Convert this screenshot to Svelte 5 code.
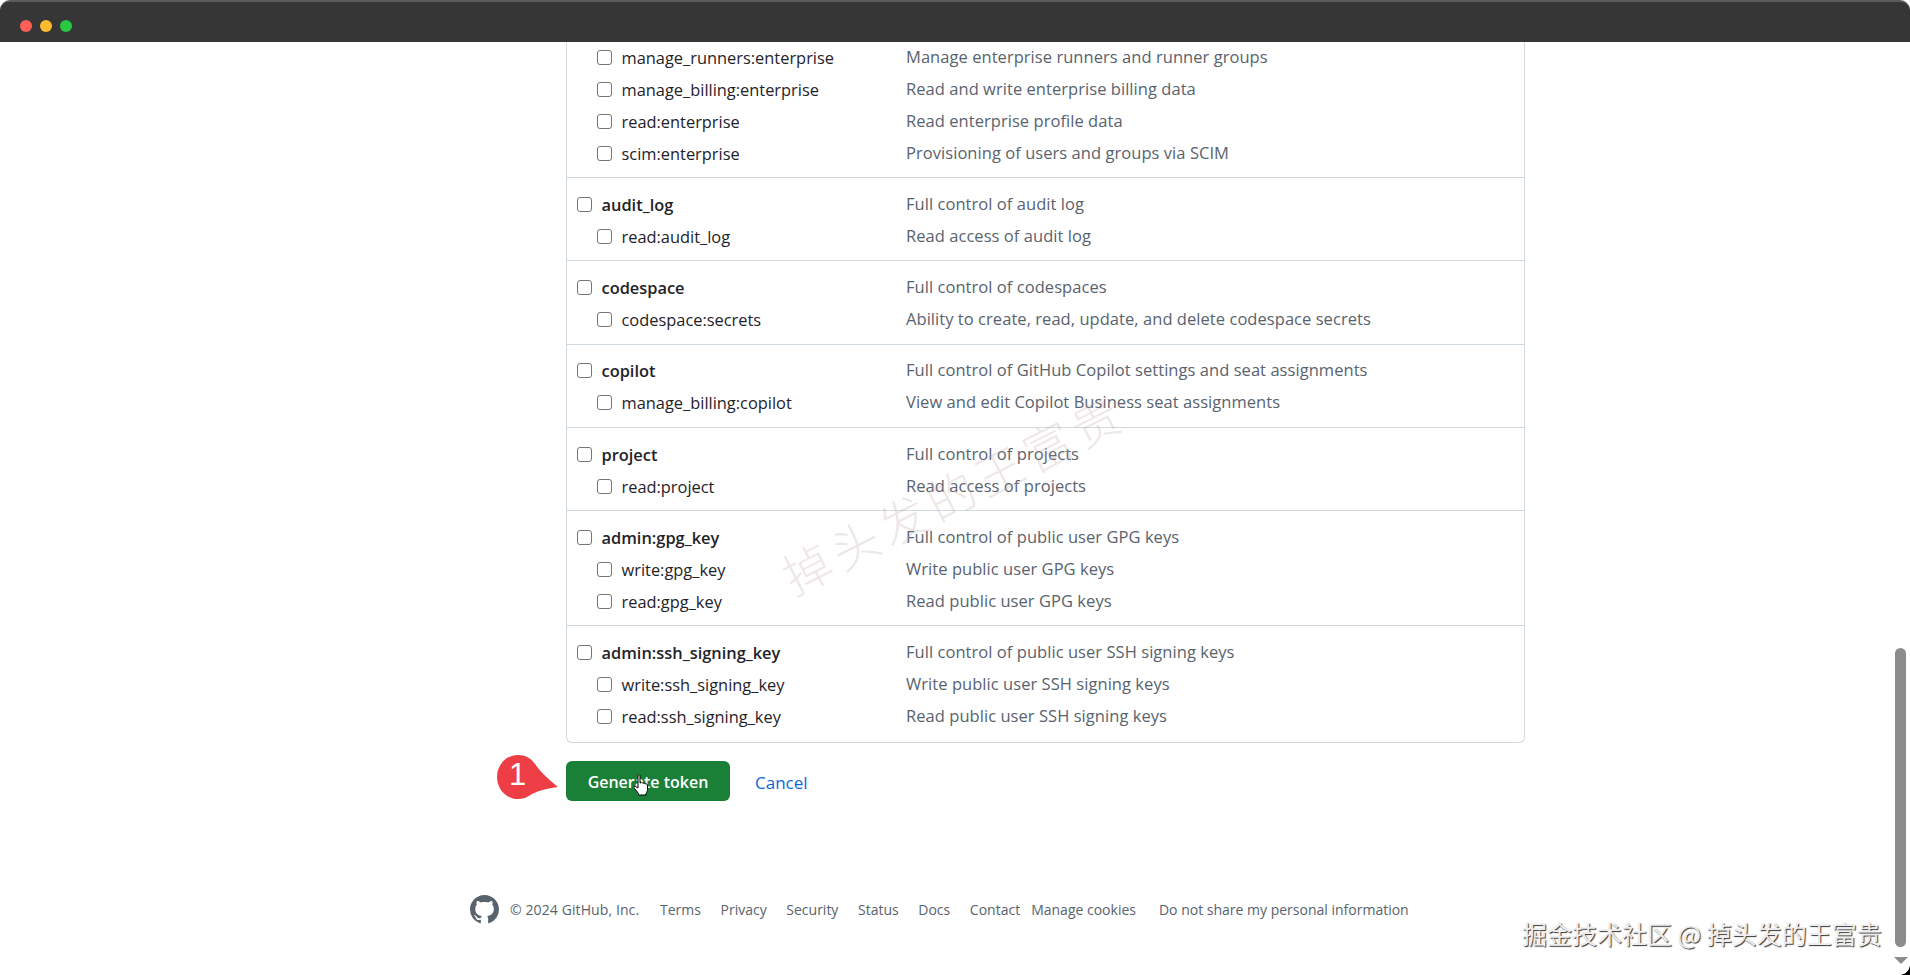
<script>
  const groups = [
    { flush: true, rows: [
      ['manage_runners:enterprise', 'Manage enterprise runners and runner groups'],
      ['manage_billing:enterprise', 'Read and write enterprise billing data'],
      ['read:enterprise', 'Read enterprise profile data'],
      ['scim:enterprise', 'Provisioning of users and groups via SCIM']
    ]},
    { head: ['audit_log', 'Full control of audit log'], rows: [
      ['read:audit_log', 'Read access of audit log']
    ]},
    { head: ['codespace', 'Full control of codespaces'], rows: [
      ['codespace:secrets', 'Ability to create, read, update, and delete codespace secrets']
    ]},
    { head: ['copilot', 'Full control of GitHub Copilot settings and seat assignments'], rows: [
      ['manage_billing:copilot', 'View and edit Copilot Business seat assignments']
    ]},
    { head: ['project', 'Full control of projects'], rows: [
      ['read:project', 'Read access of projects']
    ]},
    { head: ['admin:gpg_key', 'Full control of public user GPG keys'], rows: [
      ['write:gpg_key', 'Write public user GPG keys'],
      ['read:gpg_key', 'Read public user GPG keys']
    ]},
    { head: ['admin:ssh_signing_key', 'Full control of public user SSH signing keys'], rows: [
      ['write:ssh_signing_key', 'Write public user SSH signing keys'],
      ['read:ssh_signing_key', 'Read public user SSH signing keys']
    ]}
  ];
  const links = ['Terms', 'Privacy', 'Security', 'Status', 'Docs', 'Contact'];
</script>

<div class="window">
  <header class="titlebar">
    <span class="dot red"></span><span class="dot yellow"></span><span class="dot green"></span>
  </header>

  <main class="page">
    <section class="scopes">
      {#each groups as g}
        <div class="group" class:flush={g.flush}>
          {#if g.head}
            <div class="row parent">
              <label><input type="checkbox" /><span>{g.head[0]}</span></label>
              <p>{g.head[1]}</p>
            </div>
          {/if}
          {#each g.rows as r}
            <div class="row child">
              <label><input type="checkbox" /><span>{r[0]}</span></label>
              <p>{r[1]}</p>
            </div>
          {/each}
        </div>
      {/each}
    </section>

    <div class="actions">
      <button type="button">Generate token</button>
      <a href="#cancel" class="cancel">Cancel</a>
      <div class="callout">
        <svg viewBox="0 0 70 50" width="70" height="50" aria-hidden="true">
          <path d="M22 1C29 1 35 4 39 10C45 19 55 27 62 33C53 34 44 36 36 40C32 43 27 45 22 45C10 45 1 35 1 23C1 11 10 1 22 1Z" fill="#ee3e45"/>
        </svg>
        <span>1</span>
      </div>
      <svg class="hand" viewBox="0 0 16 22" width="16" height="22" aria-hidden="true">
        <path d="M5 1.5C5 .6 7 .6 7 1.5V9L8.6 8.6C9.6 8.5 9.8 9 10 9.4C11 8.8 11.8 9.2 12 9.9C13 9.5 14.3 10 14.5 11V15.5C14.5 17 13.6 18.5 13 19.5V21H5.5V19.5L1.5 14.5C.6 13.2 1 12 2.2 12.2L5 14Z" fill="#fff" stroke="#000" stroke-width="1"/>
      </svg>
    </div>

    <footer class="foot">
      <svg class="mark" viewBox="0 0 16 16" width="29" height="29" aria-hidden="true">
        <path fill="#59636e" d="M8 0c4.42 0 8 3.58 8 8a8.013 8.013 0 0 1-5.45 7.59c-.4.08-.55-.17-.55-.38 0-.27.01-1.13.01-2.2 0-.75-.25-1.23-.54-1.48 1.78-.2 3.65-.88 3.65-3.95 0-.88-.31-1.59-.82-2.15.08-.2.36-1.02-.08-2.12 0 0-.67-.22-2.2.82-.64-.18-1.32-.27-2-.27-.68 0-1.36.09-2 .27-1.53-1.03-2.2-.82-2.2-.82-.44 1.1-.16 1.92-.08 2.12-.51.56-.82 1.28-.82 2.15 0 3.06 1.86 3.75 3.64 3.95-.23.2-.44.55-.51 1.07-.46.21-1.61.55-2.33-.66-.15-.24-.6-.83-1.23-.82-.67.01-.27.38.01.53.34.19.73.9.82 1.13.16.45.68 1.31 2.69.94 0 .67.01 1.3.01 1.49 0 .21-.15.45-.55.38A7.995 7.995 0 0 1 0 8c0-4.42 3.58-8 8-8Z"/>
      </svg>
      <span class="copy">© 2024 GitHub, Inc.</span>
      <nav class="links">
        {#each links as l}<a href="#{l}">{l}</a>{/each}
      </nav>
      <a href="#cookies" class="cookies">Manage cookies</a>
      <a href="#share" class="share">Do not share my personal information</a>
    </footer>
  </main>

  <div class="wm-diag">掉头发的王富贵</div>
  <div class="wm-corner">掘金技术社区 @ 掉头发的王富贵</div>

  <div class="thumb"></div>
  <div class="arrow"></div>
  <div class="corner"></div>
</div>

<style>
  :global(body) { margin: 0; background: #fff; overflow: hidden; }
  .window {
    position: relative;
    width: 1910px;
    height: 975px;
    overflow: hidden;
    background: #fff;
    font-family: "Open Sans", "Noto Sans", sans-serif;
    color: #1f2328;
  }
  .titlebar {
    position: relative;
    z-index: 2;
    height: 42px;
    box-sizing: border-box;
    padding: 0 0 0 20px;
    display: flex;
    align-items: center;
    gap: 8px;
    background: #363636;
    border-top: 2px solid #5a5a5a;
    border-radius: 10px 10px 0 0;
  }
  .dot { width: 12px; height: 12px; border-radius: 50%; margin-top: 8px; }
  .red { background: #ff5f57; }
  .yellow { background: #febc2e; }
  .green { background: #28c840; }

  .page { padding-left: 566px; }
  .scopes {
    width: 959px;
    box-sizing: border-box;
    margin-top: -1px;
    border: 1px solid #d1d9e0;
    border-top: 0;
    border-radius: 0 0 6px 6px;
    height: 702px;
  }
  .group {
    padding: 10.25px 0 8px;
    border-bottom: 1px solid #d1d9e0;
  }
  .group.flush { padding-top: 0; }
  .group:last-child { border-bottom: 0; }
  .row {
    display: grid;
    grid-template-columns: 339px 1fr;
    height: 32px;
    align-items: center;
    font-size: 16.4px;
  }
  .row p { margin: -2px 0 0; color: #59636e; font-size: 16.5px; letter-spacing: 0.05px; }
  .row label { display: flex; align-items: center; gap: 9.5px; }
  .parent label { padding-left: 10px; font-weight: 600; }
  .child label { padding-left: 30px; }
  .row input {
    appearance: none;
    box-sizing: border-box;
    width: 15px;
    height: 15px;
    margin: 0;
    flex: none;
    background: #fff;
    border: 1px solid #767676;
    border-radius: 3px;
  }

  .actions {
    position: relative;
    display: flex;
    align-items: center;
    height: 40px;
    margin-top: 18px;
    gap: 25px;
  }
  .actions button {
    width: 164px;
    height: 40px;
    padding: 2px 0 0;
    border: 0;
    border-radius: 6px;
    background: #1a7f37;
    color: #fff;
    font: 600 16px "Open Sans", sans-serif;
  }
  .cancel {
    margin-top: 2px;
    color: #0969da;
    text-decoration: none;
    font-size: 17px;
    font-weight: 500;
  }
  .callout {
    position: absolute;
    left: -70px;
    top: -7px;
    width: 70px;
    height: 50px;
  }
  .callout span {
    position: absolute;
    left: 13px;
    top: 3px;
    width: 16px;
    text-align: center;
    color: #fff;
    font: 500 31px "Liberation Sans", sans-serif;
    line-height: 36px;
  }
  .hand { position: absolute; left: 67px; top: 13px; }

  .foot {
    position: absolute;
    left: 470px;
    top: 895px;
    display: flex;
    align-items: center;
    height: 29px;
    font-size: 14px;
    color: #59636e;
  }
  .foot a { color: #59636e; text-decoration: none; }
  .mark { margin-right: 11px; }
  .copy { width: 150px; letter-spacing: 0.1px; }
  .links { display: flex; gap: 19.6px; }
  .cookies { margin-left: 11px; }
  .share { margin-left: 23px; }

  .wm-diag {
    position: absolute;
    left: 764px;
    top: 457px;
    font: 300 48px "Noto Sans CJK SC", sans-serif;
    line-height: 70px;
    letter-spacing: 6px;
    color: rgba(190, 160, 160, .26);
    white-space: nowrap;
    transform: rotate(-27deg);
    pointer-events: none;
  }
  .wm-corner {
    position: absolute;
    left: 1522px;
    top: 915px;
    font: 400 25px "Noto Sans CJK SC", sans-serif;
    line-height: 36px;
    color: #eee;
    text-shadow: 1px 1px 1px #333;
    white-space: nowrap;
  }
  .thumb {
    position: absolute;
    left: 1895px;
    top: 648px;
    width: 11px;
    height: 299px;
    border-radius: 6px;
    background: #8c8c8c;
  }
  .arrow {
    position: absolute;
    left: 1894px;
    top: 957px;
    width: 0;
    height: 0;
    border-left: 7px solid transparent;
    border-right: 7px solid transparent;
    border-top: 7px solid #8c8c8c;
  }
  .corner {
    position: absolute;
    right: 0;
    bottom: 0;
    width: 10px;
    height: 10px;
    background: radial-gradient(circle at 0 0, transparent 9.5px, #000 10px);
  }
</style>
